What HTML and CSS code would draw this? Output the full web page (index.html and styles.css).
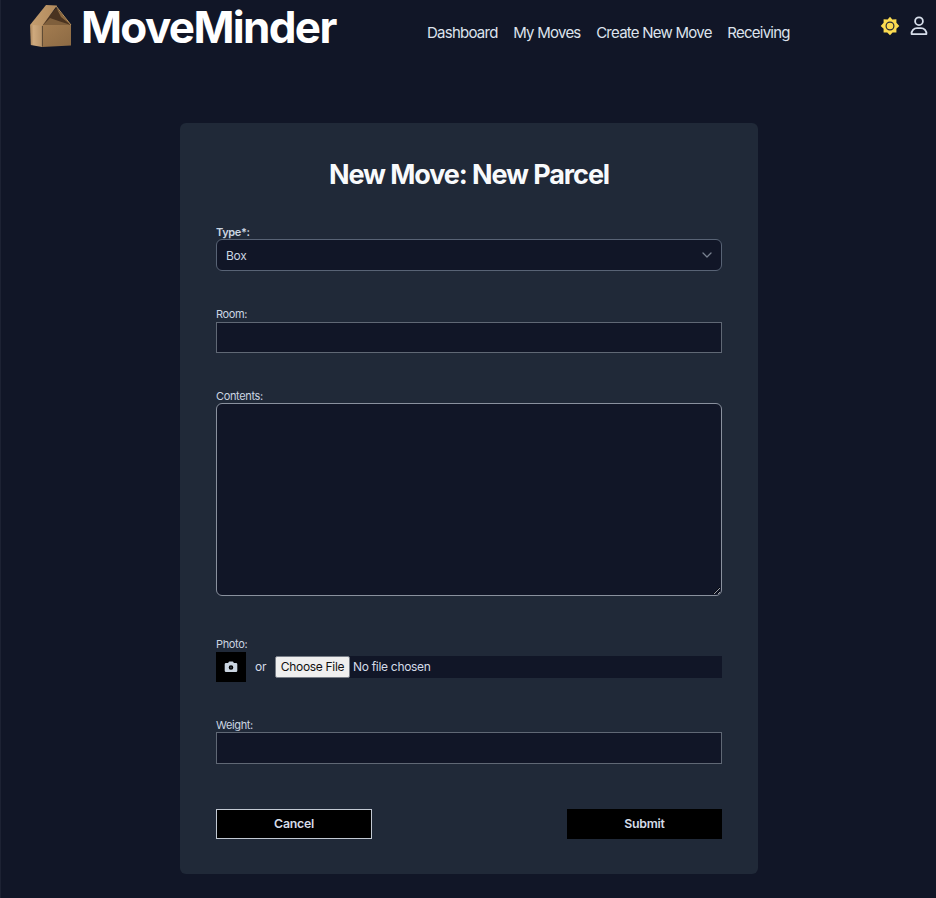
FILE: index.html
```html
<!DOCTYPE html>
<html lang="en">
<head>
<meta charset="utf-8">
<title>MoveMinder</title>
<link rel="stylesheet" href="styles.css">
</head>
<body>
<header class="header">
  <a class="brand">
    <svg class="logo" width="42" height="43" viewBox="0 0 42 43">
      <defs>
        <linearGradient id="side" x1="0" x2="1"><stop offset="0" stop-color="#a8845a"/><stop offset=".3" stop-color="#cfaa7e"/><stop offset="1" stop-color="#b8946a"/></linearGradient>
        <linearGradient id="front" x1="0" y1="0" x2="1" y2="1"><stop offset="0" stop-color="#a37c50"/><stop offset="1" stop-color="#8c6a44"/></linearGradient>
        <linearGradient id="roof" x1="0" x2="1"><stop offset="0" stop-color="#c49e70"/><stop offset="1" stop-color="#b28a5c"/></linearGradient>
      </defs>
      <path d="M0 20 12 20 12 42 .8 40Z" fill="url(#side)"/>
      <path d="M12 19.5H41V40.5L12 42Z" fill="url(#front)"/>
      <path d="M26 3 38 17 41 20H12Z" fill="#4a3320"/>
      <path d="M20 13 30 16.5 41 20H13Z" fill="#7f5f3c"/>
      <path d="M26 2 41 20 31 12Z" fill="#8c693f"/>
      <path d="M16 0 27 .5 12.5 20.5 0 20Z" fill="url(#roof)"/>
      <path d="M26 1 41 20" stroke="#b8925f" fill="none"/>
      <path d="M12.4 21V41.5" stroke="#594733" fill="none"/>
    </svg>
    <span class="brand-name">MoveMinder</span>
  </a>
  <nav class="nav">
    <a>Dashboard</a><a>My Moves</a><a>Create New Move</a><a>Receiving</a>
  </nav>
  <div class="tools">
    <svg class="sun" width="20" height="20" viewBox="0 0 20 20">
      <path d="M10 .8 12.3 3.6 16.4 3.2 16.4 6.8 19.3 10 16.4 12.7 16.4 16.4 12.6 16.4 10 19.2 7.2 16.4 3.6 16.4 3.6 12.7 .7 10 3.6 6.8 3.6 3.2 7.6 3.6Z" fill="#fbdb50"/>
      <circle cx="10" cy="10" r="3.9" fill="#fbdb50" stroke="#272935" stroke-width="1.2"/>
    </svg>
    <svg class="user" width="18" height="20" viewBox="0 0 18 20" fill="none" stroke="#d7deea" stroke-width="1.8">
      <circle cx="9" cy="5.2" r="3.9"/>
      <path d="M1.6 18.2C1.2 14.7 3.9 12.1 7 12.1H11C14.1 12.1 16.8 14.7 16.4 18.2Z" stroke-linejoin="round"/>
    </svg>
  </div>
</header>
<main class="card">
  <h1 class="title">New Move: New Parcel</h1>
  <form class="form">
    <div class="field type">
      <label class="required" for="type">Type*:</label>
      <div class="select-wrap">
        <select class="control rounded" id="type"><option>Box</option></select>
        <svg class="chevron" width="10" height="6" viewBox="0 0 10 6"><path d="M1 1 5 5 9 1" fill="none" stroke="#78818f" stroke-width="1.3" stroke-linecap="round" stroke-linejoin="round"/></svg>
      </div>
    </div>
    <div class="field room">
      <label for="room">Room:</label>
      <input class="control" id="room" type="text">
    </div>
    <div class="field contents">
      <label for="contents">Contents:</label>
      <textarea class="control rounded" id="contents"></textarea>
    </div>
    <div class="field photo">
      <label for="photo">Photo:</label>
      <div class="photo-row">
        <button class="camera" type="button" aria-label="Camera">
          <svg width="14" height="12" viewBox="0 0 14 12"><path fill="#cbd5e1" fill-rule="evenodd" d="M4.5 1.2Q4.8.4 5.5.4H8.5Q9.2.4 9.5 1.2L9.8 2H12Q13.3 2 13.3 3.3V9.8Q13.3 11.1 12 11.1H2Q.7 11.1 .7 9.8V3.3Q.7 2 2 2H4.2ZM7 4.2A2.3 2.3 0 1 0 7 8.8 2.3 2.3 0 0 0 7 4.2Z"/><circle cx="7" cy="6.5" r="1" fill="#303640"/></svg>
        </button>
        <span class="or">or</span>
        <div class="file"><span class="file-button">Choose File</span><span class="file-name">No file chosen</span></div>
      </div>
    </div>
    <div class="field weight">
      <label for="weight">Weight:</label>
      <input class="control" id="weight" type="text">
    </div>
    <div class="actions">
      <button class="btn cancel" type="button">Cancel</button>
      <button class="btn" type="button">Submit</button>
    </div>
  </form>
</main>
</body>
</html>
```
FILE: styles.css
```css
* { box-sizing: border-box; }
body {
  margin: 0;
  height: 898px;
  overflow: hidden;
  background: #111627;
  border-left: 1px solid #1d2233;
  color: #d5dce8;
  font-family: Inter, "Liberation Sans", sans-serif;
}
.header { display: flex; align-items: flex-start; height: 123px; }
.brand { display: flex; align-items: flex-start; width: 426px; padding-left: 29px; }
.logo { margin-top: 5px; }
.brand-name {
  margin-left: 9px;
  font-size: 44px;
  line-height: 54px;
  font-weight: 700;
  letter-spacing: -1.65px;
  color: #fff;
  white-space: nowrap;
}
.nav {
  display: flex;
  gap: 15.6px;
  padding-top: 22px;
  font-size: 15px;
  line-height: 22px;
  letter-spacing: -0.75px;
  white-space: nowrap;
  color: #dde3ed;
}
.tools { display: flex; gap: 10px; margin: 16px 8.5px 0 auto; }
.card {
  width: 578px;
  height: 751px;
  margin-left: 179px;
  padding: 32px 36px 36px;
  border-radius: 6px;
  background: #202938;
}
.title {
  margin: 0;
  text-align: center;
  font-size: 27px;
  line-height: 40px;
  font-weight: 700;
  letter-spacing: -1.1px;
  color: #f8fafc;
}
.form { padding-top: 30px; }
.field { display: flex; flex-direction: column; }
.field label { height: 15px; font-size: 11px; line-height: 14px; letter-spacing: -0.35px; color: #cbd5e1; }
.field label.required { height: 14px; font-weight: 600; }
.type, .room { height: 82px; }
.contents { height: 248px; }
.photo { height: 81px; }
.weight { height: 88px; }
.weight label { height: 14px; }
.control {
  appearance: none;
  display: block;
  width: 100%;
  height: 31px;
  padding: 0 9px;
  border: 1px solid #606875;
  border-radius: 0;
  background: #111627;
  color: #cbd5e1;
  font: 12px/30px Inter, sans-serif;
  letter-spacing: -0.3px;
}
.weight .control { height: 32px; }
.rounded { border-radius: 6px; border-color: #586375; }
select.control { height: 32px; padding-top: 1px; }
textarea.control { height: 193px; margin-top: -1px; border-color: #8a919e; resize: vertical; }
.select-wrap { display: grid; align-items: center; }
.select-wrap > * { grid-area: 1 / 1; }
.chevron { justify-self: end; margin-right: 10px; pointer-events: none; }
.photo-row { display: flex; align-items: center; height: 30px; margin-top: -0.5px; font-size: 12px; letter-spacing: -0.3px; }
.camera { display: grid; place-items: center; width: 30px; height: 30px; padding: 0; border: 0; background: #000; }
.or { width: 29px; padding-left: 9px; }
.file { display: flex; align-items: center; flex: 1; height: 22px; background: #111627; white-space: nowrap; }
.file-button {
  width: 75px;
  height: 22px;
  border: 1px solid #777d87;
  border-radius: 2px;
  background: #efefef;
  color: #111;
  line-height: 20px;
  text-align: center;
}
.file-name { margin-left: 3px; }
.actions { display: flex; justify-content: space-between; }
.btn {
  width: 155px;
  height: 30px;
  margin-top: 3px;
  padding: 0;
  border: 0;
  background: #000;
  color: #d5dce8;
  font: 600 12.3px/28px Inter, sans-serif;
  letter-spacing: -0.25px;
}
.cancel { width: 156px; border: 1px solid #c2c9d3; }
```
